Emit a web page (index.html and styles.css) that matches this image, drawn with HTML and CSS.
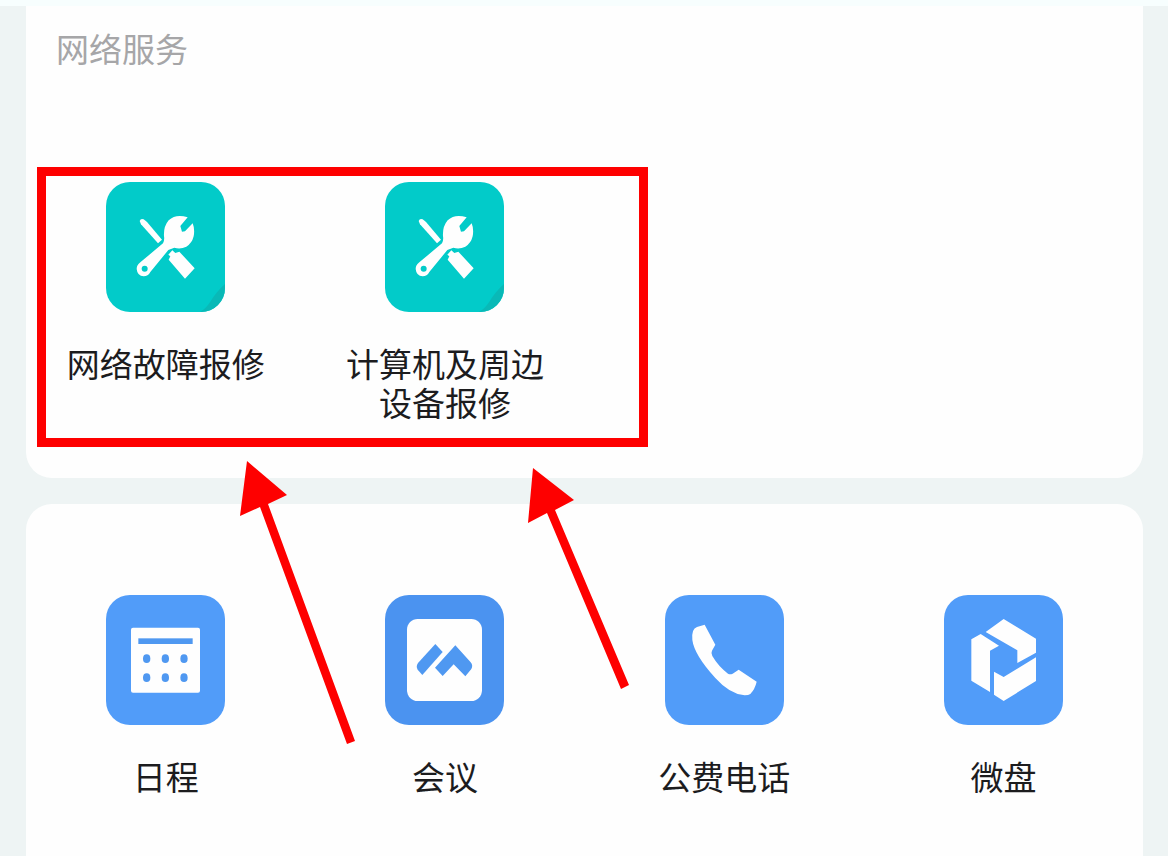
FILE: index.html
```html
<!DOCTYPE html>
<html lang="zh-CN">
<head>
    <meta charset="UTF-8">
    <meta name="viewport" content="width=device-width, initial-scale=1.0">
    <title>网络服务</title>
    <link rel="stylesheet" href="styles.css">
</head>
<body>
    <!-- Shared repair icon -->
    <svg class="symbols" aria-hidden="true">
        <symbol id="repair" viewBox="0 0 357 390">
            <path class="fold" d="M282 390Q300 380 314 358Q330 330 357 306V390Z"/>
            <path d="M101 117Q104 108 113 112L123 120L168 173L156 184L105 127Z"/>
            <path d="M245 106L223 132L228 149L237 148L260 124Q267 141 263 163Q258 184 241 194Q223 203 205 197L187 204L133 270Q126 283 113 283Q94 282 92 261Q92 249 103 241L171 184Q176 175 174 163Q172 134 188 115Q210 94 245 106Z"/>
            <circle class="hole" cx="116" cy="260" r="9"/>
            <path d="M187 218L199 205L208 213L220 209L266 259L237 290L188 233L193 223Z"/>
        </symbol>
    </svg>

    <main class="page">
        <section class="card">
            <h2 class="card-title">网络服务</h2>
            <div class="apps">
                <a class="app" href="#">
                    <svg class="icon teal" aria-hidden="true"><use href="#repair"/></svg>
                    <span class="label">网络故障报修</span>
                </a>
                <a class="app" href="#">
                    <svg class="icon teal" aria-hidden="true"><use href="#repair"/></svg>
                    <span class="label">计算机及周边设备报修</span>
                </a>
            </div>
            <div class="highlight"></div>
        </section>

        <section class="card card-tools">
            <div class="apps">
                <a class="app" href="#">
                    <svg class="icon blue" viewBox="0 0 357 390" aria-hidden="true">
                        <rect x="75" y="98" width="207" height="195" rx="6"/>
                        <g class="mark">
                            <rect x="97" y="130" width="163" height="17"/>
                            <ellipse cx="122" cy="191" rx="11" ry="13"/>
                            <ellipse cx="178" cy="191" rx="11" ry="13"/>
                            <ellipse cx="234" cy="191" rx="11" ry="13"/>
                            <ellipse cx="122" cy="248" rx="11" ry="13"/>
                            <ellipse cx="178" cy="248" rx="11" ry="13"/>
                            <ellipse cx="234" cy="248" rx="11" ry="13"/>
                        </g>
                    </svg>
                    <span class="label">日程</span>
                </a>
                <a class="app" href="#">
                    <svg class="icon meeting" viewBox="0 0 357 390" aria-hidden="true">
                        <rect x="66" y="72" width="225" height="246" rx="32"/>
                        <g class="mark">
                            <path d="M151 147L173 171L112 240L98 224Q92 214 99 204Z"/>
                            <path d="M211 151L257 202Q265 211 259 222L241 244L206 208L173 243L150 218Z"/>
                        </g>
                    </svg>
                    <span class="label">会议</span>
                </a>
                <a class="app" href="#">
                    <svg class="icon blue" viewBox="0 0 357 390" aria-hidden="true">
                        <path d="M119 89L151 149L141 167Q137 175 142 183Q160 214 189 236Q195 240 203 236L221 224L275 260Q270 282 256 297Q251 301 239 301Q195 298 151 249Q88 180 82 135Q79 101 96 96Z"/>
                    </svg>
                    <span class="label">公费电话</span>
                </a>
                <a class="app" href="#">
                    <svg class="icon blue" viewBox="0 0 357 390" aria-hidden="true">
                        <path d="M179 72L276 131V173L220 204V166L125 111Z"/>
                        <path d="M110 117L165 152L138 167V291L82 257V133Z"/>
                        <path d="M276 187V258L179 318L150 299V230L179 246Z"/>
                    </svg>
                    <span class="label">微盘</span>
                </a>
            </div>
        </section>

        <svg class="arrows" width="400" height="290" viewBox="235 460 400 290" aria-hidden="true">
            <path d="M247 461L287 495L268 504L355 741L347 744L260 507L240 516Z"/>
            <path d="M533 468L574 500L555 510L629 685L621 689L547 513L528 523Z"/>
        </svg>
    </main>
</body>
</html>
```
FILE: styles.css
```css
* {
    box-sizing: border-box;
}
body {
    margin: 0;
    background-color: #eef4f4;
    font-family: "Noto Sans CJK SC", sans-serif;
    color: #1c1c1e;
}
.symbols {
    display: none;
}
.page {
    position: relative;
    display: flex;
    flex-direction: column;
    gap: 26px;
    min-height: 100vh;
    padding: 0 25px 0 26px;
    border-top: 6px solid #f7fefe;
}
.card {
    position: relative;
    padding-bottom: 56px;
    border-radius: 0 0 26px 26px;
    background-color: #fefefe;
}
.card-tools {
    flex: 1;
    padding-top: 91px;
    border-radius: 26px 26px 0 0;
}
.card-title {
    margin: 0 0 114px;
    padding: 23px 30px 0;
    color: #a6a6a8;
    font-size: 33px;
    font-weight: 400;
    line-height: 39px;
}
.apps {
    display: grid;
    grid-template-columns: repeat(4, 1fr);
}
.app {
    display: flex;
    flex-direction: column;
    align-items: center;
    gap: 32px;
    color: inherit;
    text-decoration: none;
}
.icon {
    width: 119px;
    height: 130px;
    border-radius: 24px;
    fill: #fefefe;
}
.teal {
    background-color: #02cbc9;
}
.blue {
    background-color: #519cf9;
}
.meeting {
    background-color: #4b93f0;
}
.mark {
    fill: #4f98f1;
}
.fold {
    fill: #09b9b7;
}
.hole {
    fill: #02cbc9;
}
.label {
    max-width: 200px;
    font-size: 33px;
    line-height: 39px;
    text-align: center;
}
/* Red box and arrows drawn over the cards */
.highlight {
    position: absolute;
    top: 161px;
    left: 11px;
    width: 611px;
    height: 280px;
    border: 9px solid #fe0000;
    pointer-events: none;
}
.arrows {
    position: absolute;
    top: 454px;
    left: 235px;
    fill: #fe0000;
    pointer-events: none;
}
```
